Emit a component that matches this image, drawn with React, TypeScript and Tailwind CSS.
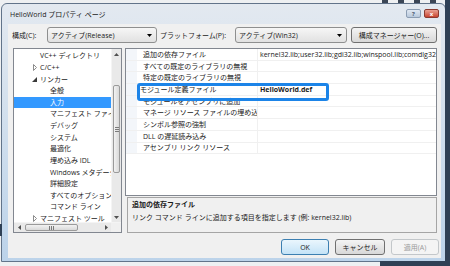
import React from 'react';

type TreeItem = { label: string; level: 1 | 2; arrow?: 'open' | 'closed'; selected?: boolean };

const treeItems: TreeItem[] = [
  { label: 'VC++ ディレクトリ', level: 1 },
  { label: 'C/C++', level: 1, arrow: 'closed' },
  { label: 'リンカー', level: 1, arrow: 'open' },
  { label: '全般', level: 2 },
  { label: '入力', level: 2, selected: true },
  { label: 'マニフェスト ファイル', level: 2 },
  { label: 'デバッグ', level: 2 },
  { label: 'システム', level: 2 },
  { label: '最適化', level: 2 },
  { label: '埋め込み IDL', level: 2 },
  { label: 'Windows メタデータ', level: 2 },
  { label: '詳細設定', level: 2 },
  { label: 'すべてのオプション', level: 2 },
  { label: 'コマンド ライン', level: 2 },
  { label: 'マニフェスト ツール', level: 1, arrow: 'closed' },
];

const props: [string, string][] = [
  ['追加の依存ファイル', 'kernel32.lib;user32.lib;gdi32.lib;winspool.lib;comdlg32.lib;advapi32.lib;shell32.lib'],
  ['すべての既定のライブラリの無視', ''],
  ['特定の既定のライブラリの無視', ''],
  ['モジュール定義ファイル', 'HelloWorld.def'],
  ['モジュールをアセンブリに追加', ''],
  ['マネージ リソース ファイルの埋め込み', ''],
  ['シンボル参照の強制', ''],
  ['DLL の遅延読み込み', ''],
  ['アセンブリ リンク リソース', ''],
];

// ---- little glyphs ----
function DownArrow({ color = '#000' }: { color?: string }) {
  return (
    <svg width="5" height="3" viewBox="0 0 5 3"><path d="M0 0h5L2.5 3z" fill={color} /></svg>
  );
}

function UpArrow({ color = '#505050' }: { color?: string }) {
  return (
    <svg width="5" height="3" viewBox="0 0 5 3"><path d="M0 3h5L2.5 0z" fill={color} /></svg>
  );
}

function SideArrow({ dir }: { dir: 'left' | 'right' }) {
  return (
    <svg width="3" height="5" viewBox="0 0 3 5">
      <path d={dir === 'left' ? 'M3 0v5L0 2.5z' : 'M0 0v5L3 2.5z'} fill="#505050" />
    </svg>
  );
}

function TreeArrow({ kind }: { kind: 'open' | 'closed' }) {
  if (kind === 'open')
    return <svg width="5" height="5" viewBox="0 0 5 5"><path d="M5 0V5H0Z" fill="#3a3a3a" /></svg>;
  return (
    <svg width="4" height="7" viewBox="0 0 4 7">
      <path d="M0.5 0.5L3.5 3.5L0.5 6.5Z" fill="none" stroke="#8c8c8c" strokeWidth="1" />
    </svg>
  );
}

// ---- controls ----
function Combo({ text, w }: { text: string; w: string }) {
  return (
    <div className={`${w} h-[16px] flex items-center justify-between pl-[3px] pr-[4px] border border-[#8e8f8f] rounded-[3px] bg-linear-to-b from-[#f6f6f6] to-[#e1e1e1] text-[#1a1a1a]`}>
      <span className="whitespace-nowrap">{text}</span>
      <DownArrow />
    </div>
  );
}

function Button({ text, w, variant = 'normal' }: { text: string; w: string; variant?: 'normal' | 'default' | 'disabled' }) {
  const look =
    variant === 'default'
      ? 'border-[#3c7fb1] bg-linear-to-b from-[#eaf6fd] to-[#c4e3f7] text-[#1a1a1a]'
      : variant === 'disabled'
        ? 'border-[#c3c7ca] bg-[#f4f4f4] text-[#9a9a9a]'
        : 'border-[#707070] bg-linear-to-b from-[#f4f4f4] to-[#d8d8d8] text-[#1a1a1a]';
  return (
    <div className={`${w} h-[16px] flex items-center justify-center border rounded-[3px] ${look}`}>
      {text}
    </div>
  );
}

function VScroll() {
  return (
    <div className="w-[10px] flex flex-col bg-[#e9e9e9] border-l border-[#f4f4f4]">
      <div className="h-[10px] flex items-center justify-center"><UpArrow /></div>
      <div className="h-[26px]" />
      <div className="h-[88px] mx-[1px] rounded-[2px] border border-[#9a9a9a] bg-linear-to-r from-[#f2f2f2] to-[#d9d9d9] flex items-center justify-center">
        <div className="flex flex-col gap-[1px]">
          <div className="w-[4px] h-px bg-[#7a7a7a]" />
          <div className="w-[4px] h-px bg-[#7a7a7a]" />
          <div className="w-[4px] h-px bg-[#7a7a7a]" />
        </div>
      </div>
      <div className="flex-1" />
      <div className="h-[10px] flex items-center justify-center"><DownArrow color="#505050" /></div>
    </div>
  );
}

function HScroll() {
  return (
    <div className="h-[10px] flex bg-[#e9e9e9] border-t border-[#f4f4f4]">
      <div className="flex-1 flex items-stretch">
        <div className="w-[10px] flex items-center justify-center"><SideArrow dir="left" /></div>
        <div className="w-[53px] my-[1px] ml-[1px] rounded-[2px] border border-[#9a9a9a] bg-linear-to-b from-[#f2f2f2] to-[#d9d9d9] flex items-center justify-center">
          <div className="flex gap-[1px]">
            <div className="w-px h-[4px] bg-[#7a7a7a]" />
            <div className="w-px h-[4px] bg-[#7a7a7a]" />
            <div className="w-px h-[4px] bg-[#7a7a7a]" />
          </div>
        </div>
        <div className="flex-1" />
        <div className="w-[10px] flex items-center justify-center"><SideArrow dir="right" /></div>
      </div>
      <div className="w-[10px] bg-[#f0f0f0]" />
    </div>
  );
}

function Tree() {
  return (
    <div className="w-[109px] h-[185px] border border-[#828790] bg-white flex flex-col">
      <div className="flex-1 flex min-h-0">
        <div className="flex-1 overflow-hidden pt-[1px]">
          {treeItems.map((it) => (
            <div
              key={it.label}
              className={`h-[11.64px] flex items-center whitespace-nowrap ${it.selected ? 'bg-[#3399ff] text-white' : 'text-[#1a1a1a]'}`}
            >
              <div className={`${it.level === 1 ? 'w-[26px]' : 'w-[36px]'} shrink-0 flex justify-end pr-[3px]`}>
                {it.arrow && <TreeArrow kind={it.arrow} />}
              </div>
              <span>{it.label}</span>
            </div>
          ))}
        </div>
        <VScroll />
      </div>
      <HScroll />
    </div>
  );
}

function PropertyGrid() {
  return (
    <div className="relative h-[148px] border border-[#828790] bg-white">
      {props.map(([name, value], i) => (
        <div key={name} className="h-[11.7px] flex border-b border-[#f0f0f0]">
          <div className="w-[11px] shrink-0 bg-[#f3f6fa]" />
          <div className={`w-[120px] shrink-0 overflow-hidden whitespace-nowrap flex items-center text-[#1a1a1a] ${i === 3 ? 'pl-[3px]' : 'pl-[6px]'}`}>
            {name}
          </div>
          <div className={`flex-1 overflow-hidden whitespace-nowrap flex items-center pl-[2px] border-l border-[#f0f0f0] text-[#1a1a1a] ${i === 3 ? 'font-bold' : ''}`}>
            {value}
          </div>
        </div>
      ))}
      {/* annotation highlight */}
      <div className="absolute left-[11px] top-[34px] w-[192px] h-[18px] border-[3px] border-[#1c84e8] rounded-[3px]" />
    </div>
  );
}

export default function App() {
  return (
    <div className="relative w-[450px] h-[266px] overflow-hidden bg-[#eef0f2] text-[7px] leading-none font-['Open_Sans','Noto_Sans_CJK_JP',sans-serif]">
      {/* desktop behind the dialog */}
      <div className="absolute right-0 top-0 w-[5px] h-full bg-[#2f4055]" />
      <div className="absolute right-0 bottom-0 w-[70px] h-[5px] bg-[#2f4055]" />
      <div className="absolute left-0 top-[224px] w-[2px] h-[12px] bg-[#2f4055]" />
      <div className="absolute left-[382px] top-0 w-[6px] h-[3px] bg-[#3b4656]" />
      <div className="absolute left-[398px] top-0 w-[6px] h-[3px] bg-[#3b4656]" />
      <div className="absolute left-[414px] top-0 w-[6px] h-[3px] bg-[#3b4656]" />
      <div className="absolute left-[430px] top-0 w-[6px] h-[3px] bg-[#3b4656]" />

      <div className="pl-[1px] pt-[3px]">
        <div className="w-[445px] h-[259px] border border-[#62748a] rounded-t-[6px] bg-linear-to-b from-[#e3e9f0] to-[#bcd3ea] flex flex-col">
          {/* title bar */}
          <div className="h-[20px] flex justify-between">
            <div className="pl-[8px] flex items-center text-[#1a1a1a]">HelloWorld プロパティ ページ</div>
            <div className="flex gap-[3px] pt-[5px] pr-[6px]">
              <div className="w-[15px] h-[9px] rounded-[2px] border border-[#8b9db3] bg-linear-to-b from-[#dfe8f2] to-[#b9c9dc] flex items-center justify-center text-[6px] text-[#4a5a6e] font-bold">?</div>
              <div className="w-[15px] h-[9px] rounded-[2px] border border-[#8a3a30] bg-linear-to-b from-[#e8a093] to-[#c7432f] flex items-center justify-center text-[6px] text-white font-bold">x</div>
            </div>
          </div>

          {/* client area */}
          <div className="ml-[6px] mr-[4px] h-[234px] bg-[#f0f0f0] flex flex-col">
            <div className="mt-[3px] h-[16px] flex items-center">
              <div className="ml-[4px] w-[35px] text-[#1a1a1a]">構成(C):</div>
              <Combo text="アクティブ(Release)" w="w-[110px]" />
              <div className="ml-[3px] w-[75px] text-[#1a1a1a] whitespace-nowrap">プラットフォーム(P):</div>
              <Combo text="アクティブ(Win32)" w="w-[112px]" />
              <div className="ml-[4px]">
                <Button text="構成マネージャー(O)..." w="w-[86px]" />
              </div>
            </div>

            <div className="mt-[5px] pl-[5px] flex h-[185px]">
              <Tree />
              <div className="ml-[3px] w-[312px] flex flex-col">
                <PropertyGrid />
                <div className="mt-[1px] ml-[2px] w-[310px] h-[36px] border border-[#a5a5a5] pl-[4px] pt-[1px] text-[#1a1a1a]">
                  <div className="h-[10px] flex items-center font-bold">追加の依存ファイル</div>
                  <div className="mt-[3px] h-[10px] flex items-center">リンク コマンド ラインに追加する項目を指定します (例: kernel32.lib)</div>
                </div>
              </div>
            </div>

            <div className="mt-[6px] h-[16px] flex justify-end gap-[6px] pr-[2px]">
              <Button text="OK" w="w-[48px]" variant="default" />
              <Button text="キャンセル" w="w-[50px]" />
              <Button text="適用(A)" w="w-[48px]" variant="disabled" />
            </div>
          </div>
        </div>
      </div>
    </div>
  );
}
